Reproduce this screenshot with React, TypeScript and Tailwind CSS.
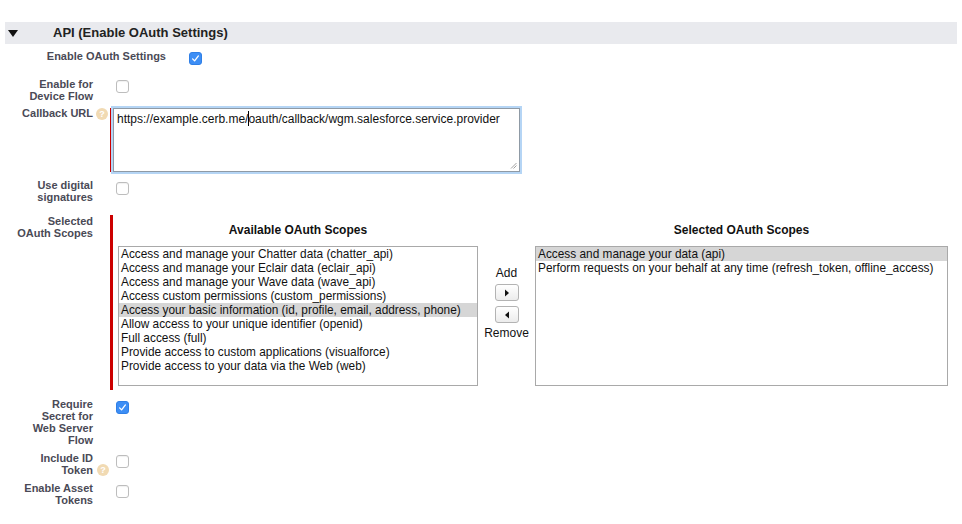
import React from "react";

function Checkbox({ checked }: { checked?: boolean }) {
  if (checked) {
    return (
      <div className="w-[13px] h-[13px] rounded-[3px] bg-[#3d8ef5] border border-[#2f7fe6] flex items-center justify-center">
        <svg width="9" height="9" viewBox="0 0 9 9">
          <path d="M1.6 4.9 L3.6 6.9 L7.4 1.9" stroke="white" strokeWidth="1.3" fill="none" strokeLinecap="round" strokeLinejoin="round" />
        </svg>
      </div>
    );
  }
  return <div className="w-[13px] h-[13px] rounded-[3px] border border-[#bdbdbd] bg-white shadow-[inset_0_1px_1px_rgba(0,0,0,0.06)]" />;
}

function Help() {
  return (
    <div className="w-[12px] h-[12px] rounded-full bg-[#f1dab3] flex items-center justify-center text-white text-[9px] leading-none font-bold">
      ?
    </div>
  );
}

function Label({ children }: { children: React.ReactNode }) {
  return (
    <div className="w-[93px] shrink-0 text-right text-[11px] leading-[12px] font-bold text-[#4a4a56]">{children}</div>
  );
}

function ListBox({ items, selected, width }: { items: string[]; selected: number; width: string }) {
  return (
    <div className={`${width} h-[140px] border border-[#a9a9a9] bg-white text-[11.85px] leading-[14px] text-[#111] overflow-hidden`}>
      {items.map((it, i) => (
        <div key={i} className={`px-[2px] whitespace-nowrap ${i === selected ? "bg-[#d6d6d6]" : ""}`}>
          {it}
        </div>
      ))}
    </div>
  );
}

function ArrowButton({ dir }: { dir: "right" | "left" }) {
  return (
    <div className="w-[24px] h-[17px] rounded-[3px] border border-[#b3b3b3] bg-gradient-to-b from-white to-[#ececec] flex items-center justify-center">
      <svg width="6" height="8" viewBox="0 0 6 8">
        {dir === "right" ? <path d="M1 0.5 L5 4 L1 7.5 Z" fill="#111" /> : <path d="M5 0.5 L1 4 L5 7.5 Z" fill="#111" />}
      </svg>
    </div>
  );
}

export default function App() {
  const available = [
    "Access and manage your Chatter data (chatter_api)",
    "Access and manage your Eclair data (eclair_api)",
    "Access and manage your Wave data (wave_api)",
    "Access custom permissions (custom_permissions)",
    "Access your basic information (id, profile, email, address, phone)",
    "Allow access to your unique identifier (openid)",
    "Full access (full)",
    "Provide access to custom applications (visualforce)",
    "Provide access to your data via the Web (web)",
  ];
  const selected = [
    "Access and manage your data (api)",
    "Perform requests on your behalf at any time (refresh_token, offline_access)",
  ];

  return (
    <div className="w-[962px] h-[524px] bg-white font-['Liberation_Sans',Arial,sans-serif] text-[#222] overflow-hidden">
      {/* Header */}
      <div className="mt-[22px] ml-[5px] w-[952px] h-[22px] bg-[#e9eaee] flex items-center">
        <svg width="10" height="7" viewBox="0 0 10 7" className="ml-[3px]">
          <path d="M0 0 L10 0 L5 7 Z" fill="#111" />
        </svg>
        <div className="ml-[35px] text-[13px] font-bold text-[#222] leading-[16px]">API (Enable OAuth Settings)</div>
      </div>

      {/* Row 1 */}
      <div className="mt-[6px] h-[12px] flex items-start">
        <div className="w-[166px] text-right text-[11px] leading-[12px] font-bold text-[#4a4a56]">Enable OAuth Settings</div>
        <div className="ml-[23px] mt-[2px]">
          <Checkbox checked />
        </div>
      </div>

      {/* Row 2 */}
      <div className="mt-[16px] flex items-start">
        <Label>
          Enable for
          <br />
          Device Flow
        </Label>
        <div className="w-[17px] shrink-0" />
        <div className="ml-[6px] mt-[2px]">
          <Checkbox />
        </div>
      </div>

      {/* Row 3 Callback URL */}
      <div className="mt-[5px] flex items-start">
        <Label>Callback URL</Label>
        <div className="w-[17px] shrink-0 pl-[3px] pt-[1px]">
          <Help />
        </div>
        <div className="mt-[1px] flex">
          <div className="w-[3px] h-[64px] bg-[#c00]" />
          <div className="relative w-[407px] h-[64px] border border-[#8f9aa5] bg-white shadow-[0_0_0_2px_#b5d5f5] pl-[3px] pt-[2px] text-[12px] leading-[15px] text-[#111] whitespace-nowrap">
            https://example.cerb.me/
            <span className="inline-block w-px h-[15px] bg-black align-[-3px] mr-[-1px]" />
            oauth/callback/wgm.salesforce.service.provider
            <svg width="7" height="7" viewBox="0 0 7 7" className="absolute right-[2px] bottom-[2px]">
              <path d="M1 6.5 L6.5 1 M3.5 6.5 L6.5 3.5" stroke="#888" strokeWidth="0.8" />
            </svg>
          </div>
        </div>
      </div>

      {/* Row 4 */}
      <div className="mt-[7px] flex items-start">
        <Label>
          Use digital
          <br />
          signatures
        </Label>
        <div className="w-[17px] shrink-0" />
        <div className="ml-[6px] mt-[3px]">
          <Checkbox />
        </div>
      </div>

      {/* Row 5 Scopes */}
      <div className="mt-[12px] flex items-start">
        <Label>
          Selected
          <br />
          OAuth Scopes
        </Label>
        <div className="w-[17px] shrink-0" />
        <div className="flex">
          <div className="w-[3px] h-[175px] bg-[#c00]" />
          <div className="pl-[5px] flex items-start">
            <div className="flex flex-col">
              <div className="mt-[8px] h-[14px] text-center text-[12px] leading-[14px] font-bold text-[#111]">Available OAuth Scopes</div>
              <div className="mt-[9px]">
                <ListBox items={available} selected={4} width="w-[360px]" />
              </div>
            </div>
            <div className="w-[57px] flex flex-col items-center pt-[51px] text-[12px] leading-[14px] text-[#111]">
              <div>Add</div>
              <div className="mt-[4px]">
                <ArrowButton dir="right" />
              </div>
              <div className="mt-[5px]">
                <ArrowButton dir="left" />
              </div>
              <div className="mt-[3px]">Remove</div>
            </div>
            <div className="flex flex-col">
              <div className="mt-[8px] h-[14px] text-center text-[12px] leading-[14px] font-bold text-[#111]">Selected OAuth Scopes</div>
              <div className="mt-[9px]">
                <ListBox items={selected} selected={0} width="w-[413px]" />
              </div>
            </div>
          </div>
        </div>
      </div>

      {/* Row 6 */}
      <div className="mt-[8px] flex items-start">
        <Label>
          Require
          <br />
          Secret for
          <br />
          Web Server
          <br />
          Flow
        </Label>
        <div className="w-[17px] shrink-0" />
        <div className="ml-[6px] mt-[3px]">
          <Checkbox checked />
        </div>
      </div>

      {/* Row 7 */}
      <div className="mt-[6px] flex items-start">
        <Label>
          Include ID
          <br />
          Token
        </Label>
        <div className="w-[17px] shrink-0 pl-[4px] pt-[12px]">
          <Help />
        </div>
        <div className="ml-[6px] mt-[3px]">
          <Checkbox />
        </div>
      </div>

      {/* Row 8 */}
      <div className="mt-[6px] flex items-start">
        <Label>
          Enable Asset
          <br />
          Tokens
        </Label>
        <div className="w-[17px] shrink-0" />
        <div className="ml-[6px] mt-[3px]">
          <Checkbox />
        </div>
      </div>
    </div>
  );
}
